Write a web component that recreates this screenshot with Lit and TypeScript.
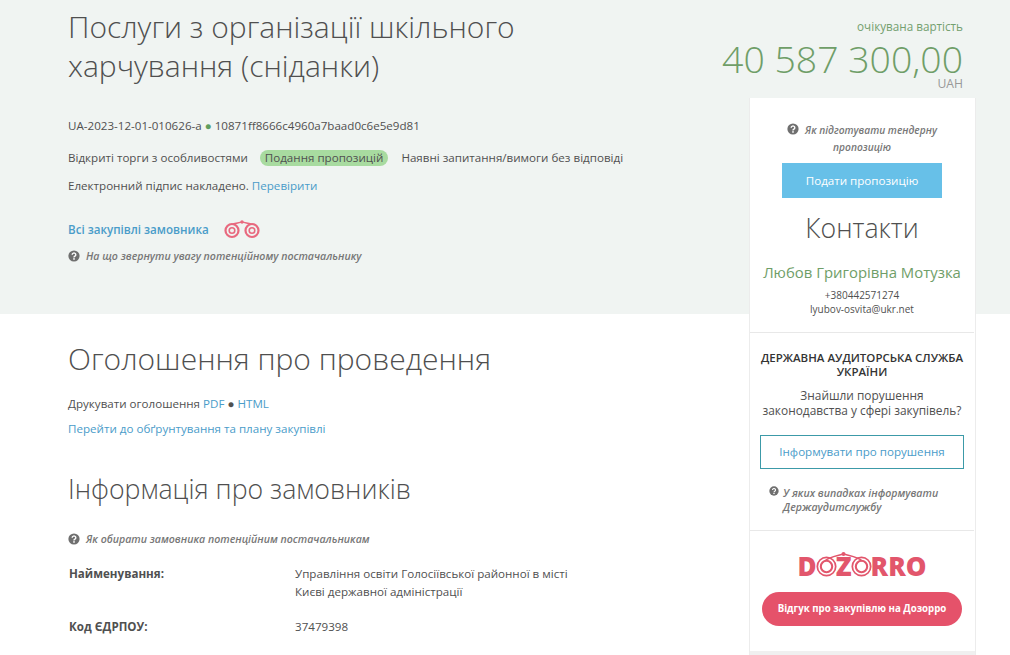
import { LitElement, html, css, svg } from "lit";
import { customElement } from "lit/decorators.js";

const helpIcon = html`<svg class="help" viewBox="0 0 12 12" aria-hidden="true">
  <circle cx="6" cy="6" r="5.6" fill="#6f6f6f"></circle>
  <path d="M4.2 4.7a1.8 1.7 0 1 1 2.7 1.5c-.6.35-.9.6-.9 1.2" fill="none" stroke="#fff" stroke-width="1.4"></path>
  <rect x="5.2" y="8.2" width="1.6" height="1.5" fill="#fff"></rect>
</svg>`;

const ring = svg`<circle cx="12" cy="12" r="10.5" fill="none" stroke="currentColor" stroke-width="2"></circle>
  <circle cx="12" cy="12" r="6.5" fill="none" stroke="currentColor" stroke-width="2.4"></circle>`;

@customElement("app-root")
export class AppRoot extends LitElement {
  static styles = css`
    :host {
      display: block;
      width: 1010px;
      height: 655px;
      overflow: hidden;
      font-family: "Open Sans", sans-serif;
      font-size: 11.6px;
      color: #505050;
      background: linear-gradient(#f0f4f2 314px, #fff 314px);
    }

    * {
      box-sizing: border-box;
    }

    a {
      color: #4a9cc9;
      text-decoration: none;
    }

    .page {
      display: grid;
      grid-template-columns: 749px 227px;
      height: 655px;
    }

    .main {
      padding: 7px 0 0 68px;
    }

    h1,
    h2,
    h3 {
      margin: 0;
      font-weight: 300;
      color: #4f4f4f;
    }

    h1 {
      width: 480px;
      font-size: 30px;
      line-height: 39px;
    }

    .line {
      line-height: 18px;
    }

    .ids {
      margin-top: 32px;
    }

    .dot {
      color: #5f9e5f;
    }

    .status {
      display: flex;
      align-items: center;
      margin-top: 14px;
    }

    .pill {
      margin: 0 13px 0 12px;
      padding: 0 5px;
      border-radius: 8px;
      background: #a8dba0;
      line-height: 16px;
    }

    .sign {
      margin-top: 10px;
    }

    .buyer {
      display: flex;
      align-items: center;
      gap: 15px;
      margin-top: 24px;
      height: 20px;
      font-weight: 600;
    }

    .bino {
      width: 36px;
      height: 20px;
      color: #e8697f;
    }

    .tip {
      display: flex;
      align-items: center;
      gap: 6px;
      font-size: 10.6px;
      font-style: italic;
      font-weight: 600;
      color: #777;
      line-height: 18px;
    }

    .help {
      flex: none;
      width: 12px;
      height: 12px;
    }

    .tip.first {
      margin-top: 8px;
    }

    h2 {
      margin-top: 74px;
      font-size: 30px;
      line-height: 40px;
    }

    .print {
      margin-top: 16px;
    }

    .plan {
      margin-top: 7px;
    }

    h3 {
      margin-top: 33px;
      font-size: 26.7px;
      line-height: 36px;
    }

    .tip.second {
      margin-top: 23px;
    }

    .row {
      display: grid;
      grid-template-columns: 227px 290px;
      line-height: 18px;
    }

    .row b {
      padding-left: 1px;
      font-weight: 700;
    }

    .row.name {
      margin-top: 17px;
    }

    .row.code {
      margin-top: 17px;
    }

    .side {
      display: flex;
      flex-direction: column;
      min-width: 0;
    }

    .price {
      height: 98px;
      margin-left: -60px;
      padding: 17px 13px 0 0;
      text-align: right;
    }

    .price small {
      display: block;
      font-size: 11.7px;
      line-height: 18px;
      color: #74a06f;
    }

    .price strong {
      display: block;
      margin-top: 5px;
      font-size: 37.4px;
      font-weight: 300;
      line-height: 38px;
      color: #6f9e68;
    }

    .price span {
      display: block;
      margin-top: 1px;
      font-size: 12.2px;
      line-height: 10px;
      color: #999;
    }

    .card {
      flex: 1;
      display: flex;
      flex-direction: column;
      padding-right: 1px;
      border: 1px solid #ececec;
      border-top: 0;
      border-bottom: 0;
      background: #fff;
    }

    .section {
      border-bottom: 1px solid #e8e8e8;
      text-align: center;
    }

    .offer {
      height: 235px;
      padding-top: 24px;
    }

    .offer .tip {
      display: block;
      width: 170px;
      margin: 0 auto;
      font-size: 10.2px;
      line-height: 17px;
      text-align: center;
    }

    .offer .help {
      margin-right: 6px;
      vertical-align: -1px;
    }

    .submit {
      width: 160px;
      height: 35px;
      margin: 7px auto 0;
      background: #67c0e8;
      color: #fff;
      line-height: 35px;
    }

    .contacts {
      margin-top: 12px;
      font-size: 26.7px;
      font-weight: 300;
      line-height: 36px;
      color: #4f4f4f;
    }

    .person {
      margin-top: 15px;
      font-size: 14.9px;
      line-height: 22px;
      color: #6f9e68;
    }

    .mail {
      margin-top: 5px;
      font-size: 10px;
      line-height: 14px;
    }

    .audit {
      height: 198px;
      padding: 18px 10px 0;
    }

    .audit h4 {
      margin: 0 -4px;
      font-size: 11.5px;
      font-weight: 600;
      line-height: 14px;
      color: #333;
      text-transform: uppercase;
    }

    .audit p {
      margin: 9px 0 0;
      font-size: 11.9px;
      line-height: 15px;
    }

    .inform {
      height: 34px;
      margin-top: 17px;
      border: 1px solid #3c9aa8;
      color: #4a9cc9;
      line-height: 32px;
    }

    .audit .tip {
      align-items: flex-start;
      gap: 4px;
      width: 195px;
      margin: 17px 0 0 9px;
      line-height: 14px;
      text-align: left;
    }

    .audit .help {
      width: 10px;
      height: 10px;
      margin-top: 0;
    }

    .review {
      position: relative;
      height: 120px;
      border-bottom: 0;
      padding-top: 20px;
    }

    .logo {
      display: flex;
      align-items: center;
      justify-content: center;
      height: 30px;
      color: #e2566c;
      font-size: 26px;
      font-weight: 800;
      line-height: 30px;
    }

    .logo svg {
      width: 21px;
      height: 21px;
      margin: 0 -1px;
    }

    .bridge {
      position: absolute;
      top: 20px;
      left: 60px;
      width: 67px;
      height: 14px;
      color: #e2566c;
    }

    .feedback {
      width: 200px;
      height: 34px;
      margin: 11px auto 0;
      border-radius: 17px;
      background: #e5526a;
      color: #fff;
      font-size: 9.7px;
      font-weight: 700;
      line-height: 34px;
    }

    .strip {
      flex: 1;
      margin-right: -1px;
      background: #f0f0f0;
    }
  `;

  render() {
    return html`
      <div class="page">
        <div class="main">
          <h1>Послуги з організації шкільного харчування (сніданки)</h1>
          <div class="line ids">UA-2023-12-01-010626-a <span class="dot">●</span> 10871ff8666c4960a7baad0c6e5e9d81</div>
          <div class="line status">
            <span>Відкриті торги з особливостями</span>
            <span class="pill">Подання пропозицій</span>
            <span>Наявні запитання/вимоги без відповіді</span>
          </div>
          <div class="line sign">Електронний підпис накладено. <a href="#">Перевірити</a></div>
          <div class="buyer">
            <a href="#">Всі закупівлі замовника</a>
            <svg class="bino" viewBox="0 0 36 20" aria-hidden="true">
              <g fill="none" stroke="currentColor">
                <circle cx="8" cy="11.5" r="6.5" stroke-width="2.2"></circle>
                <circle cx="8" cy="11.5" r="2.8" stroke-width="1.6"></circle>
                <circle cx="28" cy="11.5" r="6.5" stroke-width="2.2"></circle>
                <circle cx="28" cy="11.5" r="2.8" stroke-width="1.6"></circle>
                <path d="M9 5C12 4.500 15 3.500 18 3C21 3.500 24 4.500 27 5" stroke-width="1.4"></path>
              </g>
              <circle cx="18" cy="3" r="1.7" fill="currentColor"></circle>
            </svg>
          </div>
          <div class="tip first">${helpIcon}<span>На що звернути увагу потенційному постачальнику</span></div>

          <h2>Оголошення про проведення</h2>
          <div class="line print">Друкувати оголошення <a href="#">PDF</a> <span>●</span> <a href="#">HTML</a></div>
          <div class="line plan"><a href="#">Перейти до обґрунтування та плану закупівлі</a></div>

          <h3>Інформація про замовників</h3>
          <div class="tip second">${helpIcon}<span>Як обирати замовника потенційним постачальникам</span></div>
          <div class="row name">
            <b>Найменування:</b>
            <span>Управління освіти Голосіївської районної в місті Києві державної адміністрації</span>
          </div>
          <div class="row code">
            <b>Код ЄДРПОУ:</b>
            <span>37479398</span>
          </div>
        </div>

        <aside class="side">
          <div class="price">
            <small>очікувана вартість</small>
            <strong>40 587 300,00</strong>
            <span>UAH</span>
          </div>
          <div class="card">
            <section class="section offer">
              <div class="tip">${helpIcon}Як підготувати тендерну пропозицію</div>
              <div class="submit">Подати пропозицію</div>
              <div class="contacts">Контакти</div>
              <div class="person">Любов Григорівна Мотузка</div>
              <div class="mail">+380442571274<br />lyubov-osvita@ukr.net</div>
            </section>
            <section class="section audit">
              <h4>Державна аудиторська служба України</h4>
              <p>Знайшли порушення законодавства у сфері закупівель?</p>
              <div class="inform">Інформувати про порушення</div>
              <div class="tip">${helpIcon}<span>У яких випадках інформувати Держаудитслужбу</span></div>
            </section>
            <section class="section review">
              <div class="logo">
                <span>D</span>
                <svg viewBox="0 0 24 24" aria-hidden="true">${ring}</svg>
                <span>Z</span>
                <svg viewBox="0 0 24 24" aria-hidden="true">${ring}</svg>
                <span>RRO</span>
              </div>
              <svg class="bridge" viewBox="0 0 67 14" aria-hidden="true">
                <path d="M15 10C18 6 26 5 33.500 3C41 5 49 6 52 10" fill="none" stroke="currentColor" stroke-width="1.600"></path>
                <circle cx="33.500" cy="3" r="2" fill="currentColor"></circle>
              </svg>
              <div class="feedback">Відгук про закупівлю на Дозорро</div>
            </section>
            <div class="strip"></div>
          </div>
        </aside>
      </div>
    `;
  }
}
